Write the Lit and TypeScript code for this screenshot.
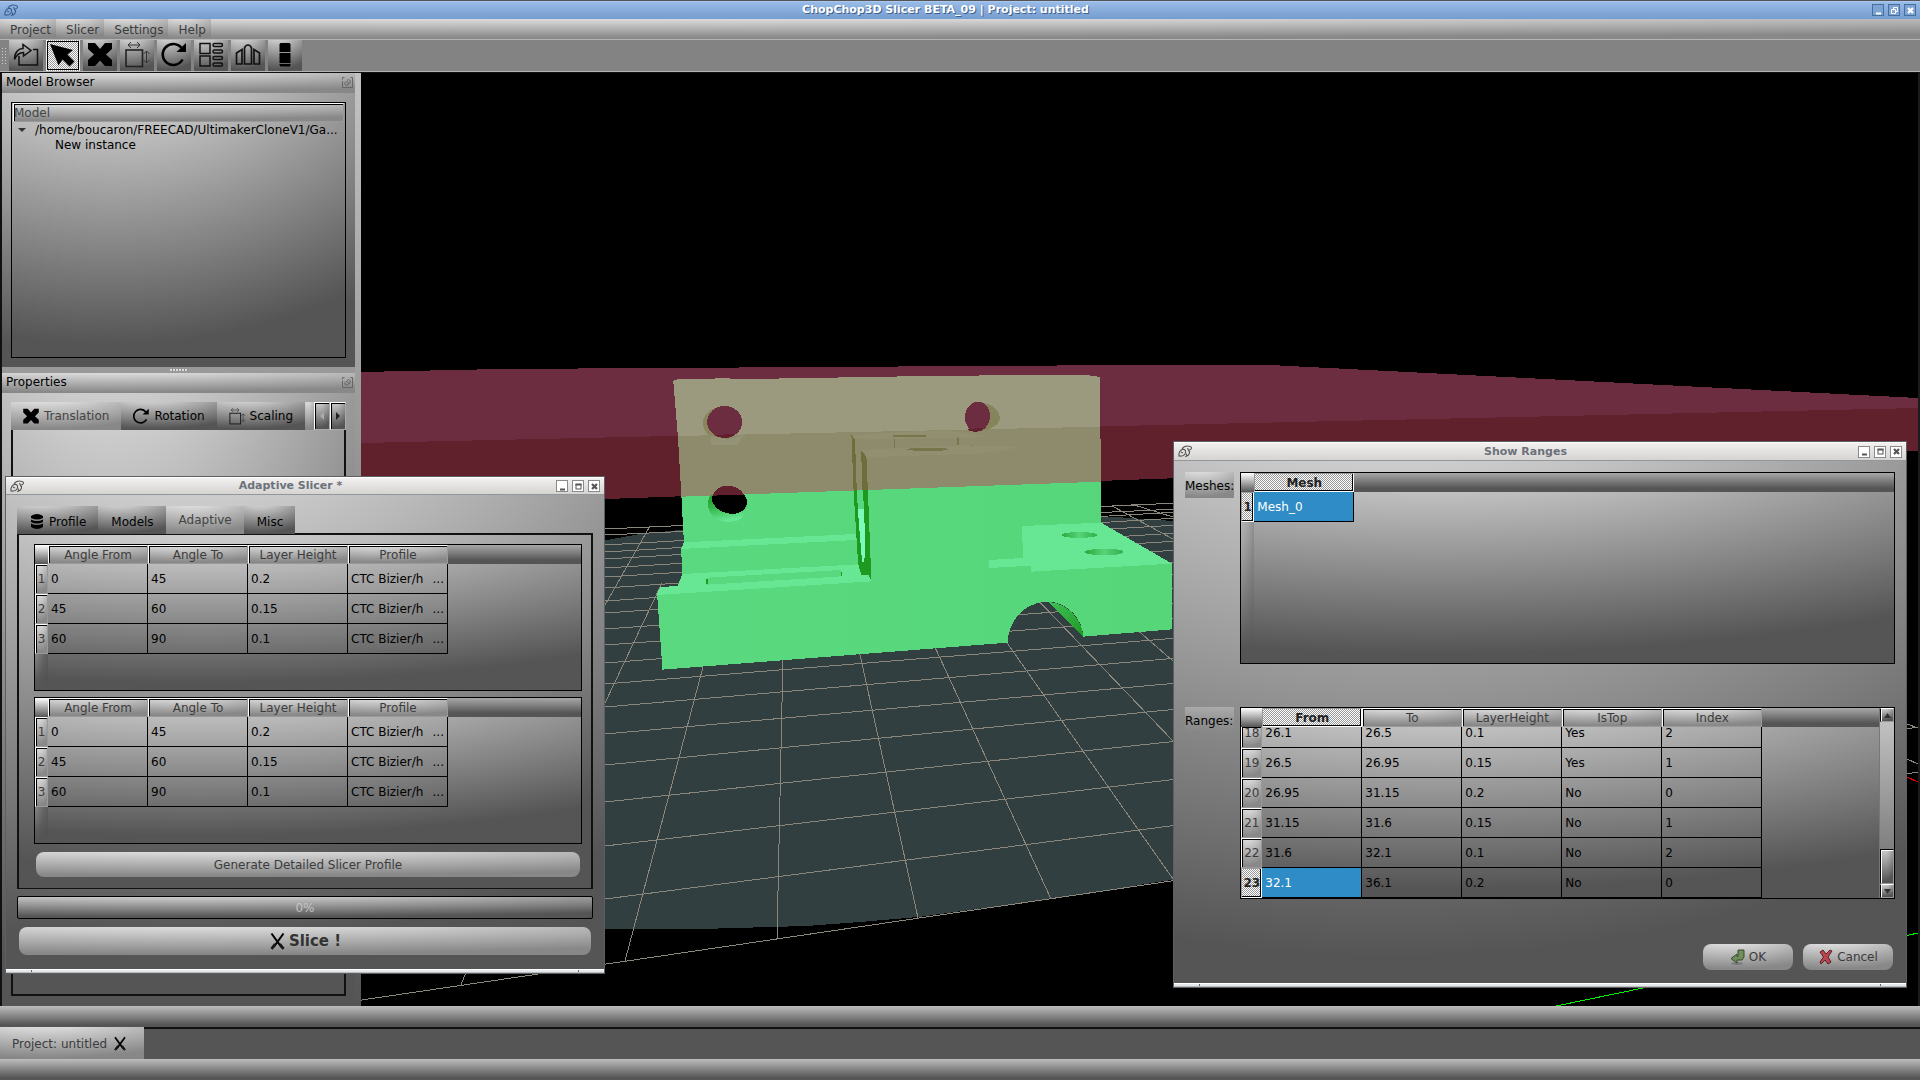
import { LitElement, html, svg, css, nothing } from "lit";
import { customElement, property } from "lit/decorators.js";
import { classMap } from "lit/directives/class-map.js";

/* ---------- icons ---------- */

const crossIcon = svg`<path d="M5 4H12L17 10 22 4H29V10L23 15.500 29 21V27H22L17 21.500 12 27H5V21L11 15.500 5 10Z"/>`;
const rotateIcon = svg`
  <path d="M24.500 9A10.500 10.500 0 1 0 25.500 20.500" fill="none" stroke="#000" stroke-width="2.600"/>
  <path d="M29 4V13H19.500Z"/>`;
const scaleIcon = svg`
  <rect x="6" y="11" width="16.500" height="16.500" fill="none" stroke="#222" stroke-width="1.600"/>
  <path d="M8 6H20M11 3 8 6 11 9M17 3 20 6 17 9M26.500 12V24M23.500 15 26.500 12 29.500 15M23.500 21 26.500 24 29.500 21" fill="none" stroke="#333"/>`;

const toolIcons: Record<string, unknown> = {
  open: svg`<g fill="none" stroke="#111" stroke-width="1.500">
      <path d="M10 17V26H28.500V10.500H24"/>
      <path d="M5.500 20.500C5.500 13 9.500 9.500 14 9.500V5.500L22 11.500 14.500 17V13.500C10.500 13.500 7.500 16 5.500 20.500Z"/></g>`,
  select: svg`<path d="M4 5 27 11 21.500 15.500 28.500 22.500 23.500 27.500 16.500 20.500 12.500 26.500Z"/>`,
  move: crossIcon,
  scale: scaleIcon,
  rotate: rotateIcon,
  arrange: svg`<g fill="none" stroke="#111" stroke-width="1.500">
      <rect x="6" y="4.500" width="10" height="10"/><rect x="6" y="17" width="10" height="10"/>
      <rect x="19" y="4.500" width="9.500" height="3" rx="1.500"/><rect x="19" y="11" width="9.500" height="3" rx="1.500"/>
      <rect x="19" y="17.500" width="9.500" height="3" rx="1.500"/><rect x="19" y="24" width="9.500" height="3" rx="1.500"/></g>`,
  supports: svg`<g fill="none" stroke="#111" stroke-width="1.700">
      <path d="M13.500 25V9C14 7.500 15.500 6 17 6S20 7.500 20.500 9V25Z"/>
      <path d="M5.500 25V14L11 10.500V25Z"/><path d="M28.500 25V14L23 10.500V25Z"/></g>`,
  layers: svg`<path d="M12.500 4H21.500L22.500 5V13H11.500V5ZM11.500 14H22.500V24H11.500ZM11.500 25H22.500V26L21.500 27.500H12.500L11.500 26Z"/>`,
};

const icon = (content: unknown, cls = "") =>
  html`<svg class=${cls} viewBox="0 0 34 32" aria-hidden="true">${content}</svg>`;

const crossedTools = html`<svg class="knives" viewBox="0 0 20 24" aria-hidden="true">
  <path d="M2 2 15 20M18 2 5 20" stroke="#000" stroke-width="2.800" fill="none"/>
  <path d="M2 22.500 7 16M18 22.500 13 16" stroke="#151515" stroke-width="3.600" fill="none"/></svg>`;

const floatIcon = html`<svg class="float" viewBox="0 0 11 11" aria-hidden="true">
  <g fill="none" stroke="#666"><path d="M.500 2.500V.500H2.500M8.500 .500H10.500V10.500H.500V4"/>
  <path d="M5 3.500 6.500 2.500 8.500 4 7.500 7M2.500 6 4.500 4.500 6.500 5.500 6 8 3.500 8Z"/></g></svg>`;

const appMark = html`<svg class="mark" viewBox="0 0 15 13" aria-hidden="true">
  <g fill="none" stroke="currentColor" stroke-width="1.100">
  <path d="M1 11C.500 8 2 5 4.500 4.500 7 4 8 5.500 7.500 7.500 7 10 5 11.500 1 11Z"/>
  <path d="M4 4C6 1 9 .500 12 1.500 14.500 2 13.500 5 11 5M7 11.500C10 11.500 12 9 11.500 6M9.500 3 11 6.500M3 7 5 8M8 8.500 9 11"/></g></svg>`;

const winGlyphs: Record<string, unknown> = {
  minimize: svg`<path d="M3 8.500H8" stroke="currentColor" stroke-width="2"/>`,
  maximize: svg`<rect x="3" y="3.500" width="5" height="4.500" fill="none" stroke="currentColor"/><path d="M2.500 3.500H8.500" stroke="currentColor" stroke-width="2"/>`,
  restore: svg`<path d="M4.500 5.500V2.500H8.500V6.500H6.500M2.500 4.500H6.500V8.500H2.500Z" fill="none" stroke="currentColor"/>`,
  close: svg`<path d="M3 3 8 8M8 3 3 8" stroke="currentColor" stroke-width="2.200"/>`,
};

const base = css`
  :host {
    --raised: radial-gradient(ellipse 135% 135% at 30% -40%, #fff, #888);
    --panel: radial-gradient(ellipse 135% 135% at 30% -40%, #fff, #555);
    --dither: repeating-conic-gradient(#999 0 25%, #fff 0 50%) 0 0 / 2px 2px;
    font: 12px/16px "DejaVu Sans", Verdana, sans-serif;
    color: #000;
  }
  *, *::before, *::after { box-sizing: border-box; }
  button { font: inherit; border: 0; margin: 0; padding: 0; background: none; color: inherit; }
  svg { display: block; flex: none; }
`;

/* ---------- title bar buttons ---------- */

@customElement("window-controls")
class WindowControls extends LitElement {
  @property() middle = "maximize";
  @property({ type: Boolean, reflect: true }) blue = false;
  static styles = [base, css`
    :host { display: flex; gap: 4px; color: #555; }
    button { width: 12px; height: 12px; background: #fff; border: 1px solid #8a8a8a; display: grid; place-items: center; }
    svg { width: 11px; height: 11px; margin: -1px; }
    :host([blue]) { color: #fff; }
    :host([blue]) button { background: #7ea4d6; border-color: #456f9f; }
  `];
  render() {
    return ["minimize", this.middle, "close"].map((k) =>
      html`<button aria-label=${k}><svg viewBox="0 0 11 11">${winGlyphs[k]}</svg></button>`);
  }
}

/* ---------- table ---------- */

interface Row { n: number; cells: string[]; clipped?: boolean; }

@customElement("data-grid")
class DataGrid extends LitElement {
  @property({ attribute: false }) columns: string[] = [];
  @property({ attribute: false }) rows: Row[] = [];
  @property({ type: Number }) selected = -1;
  @property({ type: Boolean, reflect: true }) wide = false;
  @property({ type: Boolean }) scrolls = false;

  static styles = [base, css`
    :host { display: flex; border: 1px solid #000; background: var(--panel); overflow: hidden; }
    .main { flex: 1; min-width: 0; display: flex; flex-direction: column; }
    table { width: 100%; border-spacing: 0; table-layout: fixed; }
    .num { width: 13px; }
    :host([wide]) .num { width: 21px; }
    .col { width: 100px; }
    th, td { padding: 0; font-weight: normal; }
    thead th { height: 19px; line-height: 16px; color: #3c3c3c; }
    thead .corner { background: linear-gradient(#fff, #555); }
    .head {
      background: var(--raised);
      border: 1px solid; border-color: #fff #999 #999 #fff;
      box-shadow: inset 1px 1px 0 #000;
      text-align: center;
    }
    .rest { background: linear-gradient(#a8a8a8, #555 80%); }
    tbody th { height: 30px; color: #3c3c3c; overflow: hidden; }
    tbody td {
      height: 30px; padding: 0 3px;
      border-right: 1px solid #000; border-bottom: 1px solid #000;
      white-space: nowrap; overflow: hidden;
    }
    tbody td.blank { border: 0; }
    .clipped th, .clipped td { height: 21px; line-height: 12px; vertical-align: top; }
    .clipped th { border-top: 0; }
    .elide { display: flex; justify-content: space-between; }
    .on { background: var(--dither); font-weight: bold; color: #222; border-color: #999 #fff #fff #999; box-shadow: inset -1px -1px 0 #000; }
    tbody td.hit { background: #308cc6; color: #fff; }
    .gutter { flex: 1; width: 13px; background: linear-gradient(90deg, #fff3, #0000 60%, #0002); -webkit-mask: linear-gradient(#000, #0000 90%); mask: linear-gradient(#000, #0000 90%); }
    .bar { width: 15px; display: flex; flex-direction: column; background: linear-gradient(#c8c8c8, #666); border-left: 1px solid #777; }
    .bar button { height: 14px; display: grid; place-items: center; background: var(--panel); border: 1px solid; border-color: #fff #999 #999 #000; box-shadow: inset 1px 0 0 #fff; }
    .bar svg { width: 7px; height: 5px; }
    .track { flex: 1; display: flex; flex-direction: column; justify-content: flex-end; }
    .thumb { height: 35px; background: var(--panel); border: 1px solid; border-color: #000 #999 #999 #000; box-shadow: inset 1px 1px 0 #fff; }
  `];

  private cell(text: string) {
    const cut = text.indexOf("…");
    return cut < 0 ? text : html`<span class="elide"><span>${text.slice(0, cut)}</span><span>...</span></span>`;
  }

  render() {
    const sel = this.selected;
    return html`
      <div class="main">
        <table>
          <colgroup><col class="num">${this.columns.map(() => html`<col class="col">`)}<col></colgroup>
          <thead><tr>
            <th class="corner"></th>
            ${this.columns.map((c, i) => html`<th scope="col" class=${classMap({ head: true, on: sel >= 0 && i === 0 })}>${c}</th>`)}
            <th class="rest"></th>
          </tr></thead>
          <tbody>
            ${this.rows.map((r) => html`<tr class=${classMap({ clipped: !!r.clipped })}>
              <th scope="row" class=${classMap({ head: true, on: r.n === sel })}>${r.n}</th>
              ${r.cells.map((c, i) => html`<td class=${classMap({ hit: r.n === sel && i === 0 })}>${this.cell(c)}</td>`)}
              <td class="blank"></td>
            </tr>`)}
          </tbody>
        </table>
        <div class="gutter"></div>
      </div>
      ${this.scrolls ? html`<div class="bar">
        <button aria-label="Scroll up"><svg viewBox="0 0 7 5"><path d="M3.500 0 7 5H0Z" fill="#333"/></svg></button>
        <div class="track"><div class="thumb"></div></div>
        <button aria-label="Scroll down"><svg viewBox="0 0 7 5"><path d="M0 0H7L3.500 5Z" fill="#333"/></svg></button>
      </div>` : nothing}`;
  }
}

/* ---------- 3D scene ---------- */

/* Left (x=605) and right (x=1173) heights of the build plate's cross lines. */
const crossLines: [number, number][] = [
  [964, 880], [899, 825], [846, 779], [802, 741], [765, 709], [734, 683], [707, 658], [684, 638],
  [663, 618], [645, 603], [629, 588], [613, 574], [601, 562], [588, 550], [577, 541], [568, 533],
  [559, 525], [552, 518], [545, 512], [535, 509], [529, 503],
];
const depthLines: [number, number, number, number][] = [
  [625, 961, 703, 667], [777, 939, 783, 655], [918, 918, 859, 650], [1051, 899, 934, 645],
  [1173, 879, 1005, 640], [1173, 741, 1034, 596], [1173, 661, 1135, 628], [605, 703, 662, 583],
  [605, 605, 650, 526], [461, 985, 490, 910], [1112, 506, 1173, 539], [1131, 504, 1173, 517],
  [1907, 724, 1918, 728], [1907, 729, 1918, 727], [1907, 759, 1918, 764], [1907, 774, 1918, 772],
];

@customElement("slicer-scene")
class SlicerScene extends LitElement {
  static styles = css`
    :host { display: block; position: relative; background: #000; min-width: 0; overflow: hidden; border-right: 2px solid #1c1c1c; }
    svg { position: absolute; inset: 0; width: 100%; height: 100%; }
  `;
  render() {
    return html`<svg viewBox="361 73 1557 933" preserveAspectRatio="xMinYMin slice" shape-rendering="crispEdges" role="img" aria-label="Model on the build plate">
      <defs>
        <linearGradient id="arch" x1="0" y1="0" x2="1" y2="1"><stop offset="0" stop-color="#3fbf58"/><stop offset="1" stop-color="#1f9a22"/></linearGradient>
        <linearGradient id="bore"><stop offset="0" stop-color="#2aa83a"/><stop offset=".5" stop-color="#55d47a"/><stop offset="1" stop-color="#33b048"/></linearGradient>
        <linearGradient id="side" x1="0" y1="0" x2="0.300" y2="1"><stop offset="0" stop-color="#1f9a20"/><stop offset=".45" stop-color="#35b548"/><stop offset="1" stop-color="#67e694"/></linearGradient>
        <linearGradient id="front" x2="1"><stop offset="0" stop-color="#5ad980"/><stop offset="1" stop-color="#56d679"/></linearGradient>
      </defs>
      <path fill="#323f40" d="M585 544 640 534 720 526 900 517 1101 516 1173 521 1190 522V877L1050 899 918 917 860 922 806 926 700 929 585 929Z"/>
      <g stroke="#8b877d" fill="none">
        ${crossLines.map(([l, r], i) => {
          const left = i === 0 ? 361 : 595;
          return svg`<path d="M${left} ${l + ((605 - left) * (l - r)) / 568}L1178 ${r}"/>`;
        })}
        ${depthLines.map(([a, b, c, d]) => svg`<path d="M${a} ${b}L${c} ${d}"/>`)}
      </g>
      <path fill="#6d2d40" d="M361 372 500 369 1138 365H1270L1918 398V408L361 443Z"/>
      <path fill="#60202c" d="M361 443 1918 408V451L361 508Z"/>
      <path d="M1907 777 1918 782" stroke="#f00000"/>
      <path d="M1556 1006 1648 987M1900 937 1918 933" stroke="#00f000"/>

      <g transform="translate(640 350) scale(.35714 .33333)">
        <path fill="url(#front)" d="M116 440 1291 395V518L1490 643V838L1241 860C1240 810 1200 755 1140 755S1030 810 1030 878L63 959 48 735 50 722 58 711 105 708 119 672 115 597 123 577Z"/>
        <path fill="#9b9a7f" d="M93 92 105 88 233 85 310 87 860 77 1250 75 1288 81 1289 230 106 258Z"/>
        <path fill="#8d8b6b" d="M106 258 1289 230 1291 395 116 440Z"/>

        <path fill="#918f70" d="M592 255 850 240 990 262 890 263 602 268ZM619 300 900 286 1060 290 1040 297 960 310 635 322Z"/>
        <g fill="#77764a">
          <ellipse cx="755" cy="258" rx="50" ry="4"/><ellipse cx="806" cy="298" rx="58" ry="5"/>
          <path d="M711 266H714V293H711ZM889 262 893 264V286H889ZM927 285H930V288H927Z"/>
        </g>
        <path fill="#6e6e3a" d="M592 255 602 268 607 421 598 422ZM619 300 634 320 638 419 623 420Z"/>
        <path fill="#1f9a20" d="M598 422 607 421 611 478 628 478 623 420 638 419 648 694 640 676 620 674 611 645Z"/>
        <path fill="#58d87e" d="M607 421 623 420 628 478H610Z"/>
        <path fill="#7cfab8" d="M610 478H627L631 580 628 637 622 636 616 560Z"/>

        <path fill="#67e694" d="M123 577 605 552V570L115 597Z"/>
        <path fill="#67e694" d="M119 672 611 643 620 674 640 676 649 694 48 735 50 722 58 711 105 708Z"/>
        <path fill="#5ad87f" d="M188 683 563 660 565 679 188 704Z"/>
        <path fill="#1f9a20" d="M186 688 190 685V702H186ZM563 660 566 672V679H563Z"/>

        <path fill="#67e694" d="M1070 528 1291 518 1490 641 1095 665V647L977 654V630L1072 624Z"/>
        <g fill="url(#bore)"><ellipse cx="1230" cy="555" rx="50" ry="9"/><ellipse cx="1300" cy="606" rx="54" ry="10"/></g>
        <path fill="url(#arch)" d="M1145 756C1198 760 1238 808 1241 860Z"/>

        <ellipse cx="228" cy="220" rx="52" ry="48" fill="#88865a"/>
        <path fill="#9b9a7f" d="M200 258 250 268 290 256 270 285 200 285Z" opacity=".6"/>
        <ellipse cx="237" cy="216" rx="49" ry="48" fill="#6d2d40"/>
        <path fill="#61202d" d="M208 254 268 253Q255 264 238 264T208 254Z"/>
        <path fill="#86845a" d="M960 158Q1008 170 1008 208 1000 235 950 245Z"/>
        <ellipse cx="945" cy="200" rx="35" ry="45" fill="#6d2d40" transform="rotate(6 945 200)"/>
        <path fill="#61202d" d="M918 236 962 235Q950 246 935 245T918 236Z"/>
        <path fill="url(#side)" d="M190 460Q192 436 204 434L300 455Q300 490 280 508 245 525 210 506 190 485 190 460Z"/>
        <path fill="#61202d" d="M203 437Q215 407 245 407T292 434Z"/>
        <path fill="#000" d="M203 437 292 434Q300 445 300 458C296 482 280 491 254 492Q205 482 201 445Z"/>
      </g>
    </svg>`;
  }
}

/* ---------- floating window ---------- */

@customElement("tool-window")
class ToolWindow extends LitElement {
  @property() caption = "";
  static styles = [base, css`
    :host { display: flex; flex-direction: column; border: 1px solid #5c5f63; }
    header {
      display: flex; align-items: center; height: 19px; padding: 0 4px;
      background: linear-gradient(#f2f1f0, #e3e2e0 50%, #d6d4d1);
      border-top: 1px solid #fff; border-bottom: 1px solid #92979c; color: #555;
    }
    h2 { flex: 1; margin: 0; padding-bottom: 1px; font-size: 11px; line-height: 15px; text-align: center; color: #6c717b; }
    .mark { width: 15px; height: 13px; }
    .body { flex: 1; display: flex; flex-direction: column; background: var(--panel); }
    footer { display: flex; height: 4px; background: #e6e9ec; border-top: 1px solid #fff; border-bottom: 1px solid #bbb; }
    footer::before, footer::after { content: ""; width: 26px; }
    footer::before { border-right: 1px solid #666; }
    footer::after { margin-left: auto; border-left: 1px solid #666; }
  `];
  render() {
    return html`<header>${appMark}<h2>${this.caption}</h2><window-controls></window-controls></header>
      <div class="body"><slot></slot></div><footer></footer>`;
  }
}

/* ---------- application ---------- */

const angleRows: Row[] = [
  { n: 1, cells: ["0", "45", "0.2", "CTC Bizier/h…"] },
  { n: 2, cells: ["45", "60", "0.15", "CTC Bizier/h…"] },
  { n: 3, cells: ["60", "90", "0.1", "CTC Bizier/h…"] },
];
const angleColumns = ["Angle From", "Angle To", "Layer Height", "Profile"];
const rangeRows: Row[] = [
  { n: 18, cells: ["26.1", "26.5", "0.1", "Yes", "2"], clipped: true },
  { n: 19, cells: ["26.5", "26.95", "0.15", "Yes", "1"] },
  { n: 20, cells: ["26.95", "31.15", "0.2", "No", "0"] },
  { n: 21, cells: ["31.15", "31.6", "0.15", "No", "1"] },
  { n: 22, cells: ["31.6", "32.1", "0.1", "No", "2"] },
  { n: 23, cells: ["32.1", "36.1", "0.2", "No", "0"] },
];

@customElement("app-root")
class AppRoot extends LitElement {
  static styles = [base, css`
    :host { display: flex; flex-direction: column; min-height: 100vh; position: relative; background: #555; overflow: hidden; }
    .title {
      display: flex; align-items: center; height: 19px; padding: 0 4px;
      background: linear-gradient(#9bbce8, #759dcf); border-top: 1px solid #555; box-shadow: inset 0 1px 0 #a9c8f0; color: #3c5f8c;
    }
    .title h1 { flex: 1; margin: 0; font-size: 11px; line-height: 16px; text-align: center; color: #fff; text-shadow: 1px 1px 0 #3d5f8d; }
    .mark { width: 15px; height: 13px; }
    nav { display: flex; height: 20px; background: var(--raised); color: #3c3c3c; }
    nav button { padding: 2px 5px 0 10px; background: var(--raised); }
    .tools {
      display: flex; gap: 3px; height: 33px; padding-left: 1px; background: #838383;
      border-top: 1px solid #b4b4b4; border-bottom: 1px solid #b4b4b4;
    }
    .grip { width: 5px; height: 17px; margin: 7px 0; background: radial-gradient(circle, #ccc 1px, #0000 1px) 0 0 / 3px 3px; }
    .tools button { width: 34px; height: 31px; background: var(--panel); }
    .tools svg { width: 34px; height: 32px; margin-top: -1px; }
    .tools .down { background: var(--dither); outline: 1px solid #000; outline-offset: -2px; border: 1px solid #eee; border-width: 0 1px; }
    .tools .down svg { margin-left: -1px; }

    .work { flex: 1; display: flex; border-top: 1px solid #111; border-left: 2px solid #111; }
    .dock { width: 353px; display: flex; flex-direction: column; }
    .bar { display: flex; justify-content: space-between; align-items: center; height: 20px; padding: 0 2px 3px 4px; background: var(--raised); }
    .bar h2 { margin: 0; font-size: 12px; font-weight: normal; }
    .float { width: 11px; height: 11px; margin-top: 2px; }
    .pad { padding: 9px; background: var(--panel); }
    .tree { height: 256px; border: 1px solid #000; background: var(--panel); }
    .tree h3 {
      margin: 0 1px; height: 19px; font-size: 12px; font-weight: normal; line-height: 18px; color: #444;
      background: var(--raised); border: 1px solid; border-color: #fff #999 #999 #fff; box-shadow: inset 1px 1px 0 #000;
    }
    .tree ul { margin: 0; padding: 0; list-style: none; }
    .tree li { display: flex; align-items: center; gap: 9px; height: 15px; padding-left: 6px; white-space: nowrap; }
    .tree li svg { width: 8px; height: 4px; }
    .tree .child { padding-left: 43px; }
    .split { height: 6px; background: #999; display: grid; place-items: center; }
    .split::before { content: ""; width: 18px; height: 2px; background: repeating-linear-gradient(90deg, #ddd 0 2px, #888 2px 3px); }
    .props { flex: 1; display: flex; flex-direction: column; padding-bottom: 10px; }
    .tabs { display: flex; height: 28px; }
    .tabs button { display: flex; align-items: center; background: var(--panel); }
    .tabs .cur { background: var(--raised); color: #444; padding-bottom: 2px; }
    .tabs .mini { width: 22px; height: 21px; }
    .props .tabs > button { gap: 2px; padding: 0 12px 0 9px; }
    .props .tabs > .scroll { flex: 1; padding: 0; justify-content: center; border: 1px solid; border-color: #fff #aaa #aaa #fff; box-shadow: inset 1px 1px 0 #000; }
    .stub { flex: none; width: 9px; background: var(--raised); }
    .scroll svg { width: 4px; height: 8px; }
    .pane { flex: 1; border: 2px solid #111; border-top: 0; background: var(--panel); }
    .vsplit { width: 6px; background: linear-gradient(#c2c2c2, #555); }
    slicer-scene { flex: 1; }
    .status { height: 21px; background: linear-gradient(#bdbdbd, #555 90%); }
    .projects { display: flex; height: 32px; background: #555; box-shadow: inset 0 2px 0 #111; }
    .projects button { display: flex; align-items: center; gap: 6px; padding: 1px 17px 0 12px; background: var(--raised); color: #3c3c3c; }
    .projects .knives { width: 14px; height: 15px; }

    tool-window { position: absolute; }
    .adaptive { left: 5px; top: 476px; width: 600px; height: 498px; }
    .ranges { left: 1173px; top: 441px; width: 734px; height: 547px; }

    .slicer { flex: 1; display: flex; flex-direction: column; padding: 11px 11px 14px; }
    .slicer .tabs > button { padding: 3px 12px 0 13px; gap: 5px; }
    .slicer .tabs > .cur { padding: 0 12px 0 13px; }
    .disks { width: 14px; height: 17px; }
    .sheet {
      flex: 1; display: flex; flex-direction: column; gap: 6px; padding: 9px 9px 11px 15px;
      border: 2px solid #111; border-bottom-width: 1px; background: var(--panel);
    }
    .slicer .tabs { margin-bottom: -1px; z-index: 1; }
    .sheet data-grid { height: 147px; }
    .push { background: var(--raised); border-radius: 8px; color: #3c3c3c; display: flex; align-items: center; justify-content: center; gap: 3px; }
    .make { height: 25px; margin: 2px 2px 0; flex: none; }
    .progress { margin-top: 7px; height: 23px; line-height: 22px; text-align: center; color: #c4c4c4; background: var(--panel); border: 1px solid #000; border-radius: 2px; }
    .go { height: 28px; margin: 8px 2px 0; font-size: 15px; font-weight: bold; color: #333; }
    .knives { width: 17px; height: 18px; }

    .form { flex: 1; display: grid; grid-template-columns: auto 1fr; column-gap: 6px; align-content: start; padding: 11px 11px 0; }
    .form > span { align-self: start; height: 26px; line-height: 28px; background: var(--raised); }
    .form > .soft { background: linear-gradient(#fff4, #fff1 60%, #fff0); }
    .form data-grid { height: 192px; }
    .form .second { margin-top: 43px; }
    .actions { display: flex; justify-content: flex-end; gap: 10px; padding: 0 13px 13px; }
    .actions button { width: 90px; height: 26px; }
    .actions svg { width: 16px; height: 16px; }
  `];

  render() {
    const tools = Object.keys(toolIcons);
    return html`
      <header class="title">${appMark}<h1>ChopChop3D Slicer BETA_09 | Project: untitled</h1>
        <window-controls blue middle="restore"></window-controls></header>
      <nav aria-label="Menu">${["Project", "Slicer", "Settings", "Help"].map((m) => html`<button>${m}</button>`)}</nav>
      <div class="tools" role="toolbar"><div class="grip"></div>
        ${tools.map((t) => html`<button aria-label=${t} class=${classMap({ down: t === "select" })}>${icon(toolIcons[t])}</button>`)}
      </div>

      <main class="work">
        <aside class="dock">
          <div class="bar"><h2>Model Browser</h2>${floatIcon}</div>
          <div class="pad"><div class="tree">
            <h3>Model</h3>
            <ul>
              <li><svg viewBox="0 0 8 4"><path d="M0 0H8L4 4Z" fill="#333"/></svg><span>/home/boucaron/FREECAD/UltimakerCloneV1/Ga...</span></li>
              <li class="child">New instance</li>
            </ul>
          </div></div>
          <div class="split"></div>
          <div class="bar"><h2>Properties</h2>${floatIcon}</div>
          <div class="pad props">
            <div class="tabs" role="tablist">
              <button role="tab" class="cur">${icon(crossIcon, "mini")}Translation</button>
              <button role="tab">${icon(rotateIcon, "mini")}Rotation</button>
              <button role="tab">${icon(scaleIcon, "mini")}Scaling</button>
              <div class="stub"></div>
              <button class="scroll" aria-label="Previous tabs"><svg viewBox="0 0 4 8"><path d="M4 0V8L0 4Z" fill="#aaa"/></svg></button>
              <button class="scroll" aria-label="Next tabs"><svg viewBox="0 0 4 8"><path d="M0 0V8L4 4Z" fill="#222"/></svg></button>
            </div>
            <div class="pane"></div>
          </div>
        </aside>
        <div class="vsplit"></div>
        <slicer-scene></slicer-scene>
      </main>
      <div class="status"></div>
      <div class="projects"><button>Project: untitled ${crossedTools}</button></div>
      <div class="status"></div>

      <tool-window class="adaptive" caption="Adaptive Slicer *">
        <div class="slicer">
          <div class="tabs" role="tablist">
            <button role="tab"><svg class="disks" viewBox="0 0 14 17"><path d="M1 3Q7-1 13 3V5Q7 8 1 5ZM1 6.500Q7 9.500 13 6.500V9Q7 12 1 9ZM1 10.500Q7 13.500 13 10.500V14Q7 18 1 14Z"/></svg>Profile</button>
            <button role="tab">Models</button>
            <button role="tab" class="cur">Adaptive</button>
            <button role="tab">Misc</button>
          </div>
          <div class="sheet">
            <data-grid .columns=${angleColumns} .rows=${angleRows}></data-grid>
            <data-grid .columns=${angleColumns} .rows=${angleRows}></data-grid>
            <button class="push make">Generate Detailed Slicer Profile</button>
          </div>
          <div class="progress" role="progressbar" aria-valuenow="0">0%</div>
          <button class="push go">${crossedTools}Slice !</button>
        </div>
      </tool-window>

      <tool-window class="ranges" caption="Show Ranges">
        <div class="form">
          <span>Meshes:</span>
          <data-grid .columns=${["Mesh"]} .rows=${[{ n: 1, cells: ["Mesh_0"] }]} .selected=${1}></data-grid>
          <span class="second soft">Ranges:</span>
          <data-grid class="second" wide scrolls .columns=${["From", "To", "LayerHeight", "IsTop", "Index"]} .rows=${rangeRows} .selected=${23}></data-grid>
        </div>
        <div class="actions">
          <button class="push"><svg viewBox="0 0 16 16"><ellipse cx="7" cy="14.500" rx="6" ry="1.500" fill="#0003"/><path d="M8 1H14V8L12 11H7V14L1 9.500 7 5V7.500H8Z" fill="#6f8f5a" stroke="#3c4a2c"/></svg>OK</button>
          <button class="push"><svg viewBox="0 0 16 16"><path d="M2 3 5 1 8 5 12 1 14 2 10 8 13 13 10 15 7 11 3 15 2 13 5.500 8Z" fill="#b84550" stroke="#5c1f26"/></svg>Cancel</button>
        </div>
      </tool-window>`;
  }
}
